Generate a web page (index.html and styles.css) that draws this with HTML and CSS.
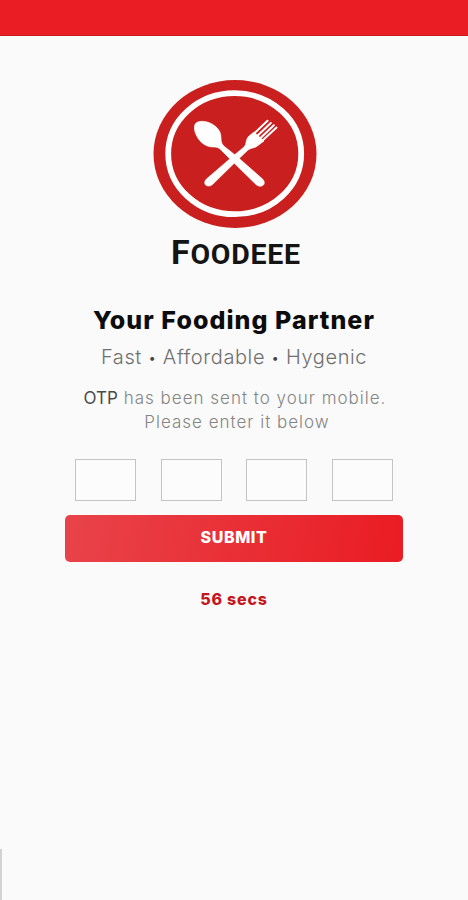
FILE: index.html
```html
<!DOCTYPE html>
<html lang="en">

<head>
    <meta charset="UTF-8">
    <meta name="viewport" content="width=device-width, initial-scale=1">
    <title>Foodeee</title>
    <link rel="stylesheet" href="styles.css">
</head>

<body>
    <div class="screen">
        <header class="status-bar"></header>
        <main class="content">
            <svg class="logo" width="164" height="192" viewBox="153 79 164 192" role="img" aria-label="Foodeee">
                <ellipse cx="235" cy="154" rx="81.5" ry="74" fill="#c9201f" />
                <ellipse cx="234.7" cy="153.7" rx="66.5" ry="60.5" fill="none" stroke="#fff" stroke-width="5.8" />
                <!-- spoon -->
                <path fill="#fff" stroke="#fff" stroke-width=".6" d="M196 123C200 120 209 121 215 126C220 130 221 134 221 138C221 142 222 145 225 147L237 156.500L262 178.500C268 184 261 189 256 184.500L232 161L221 150C219 147.500 216 147 213 147C205 147 198 141 195 132C194 128 194 125 196 123Z" />
                <!-- fork -->
                <path fill="#fff" stroke="#fff" stroke-width=".6" d="M254 132L264 141L258 145.500C255 148.500 251 147.500 248 150L236 161.500L213 184C208 189 201 184 207 178.500L232 157L244 147C247 144 245 140 249 136Z" />
                <path fill="none" stroke="#fff" stroke-width="2" stroke-linecap="round" d="M253.500 134L267.500 120.700M256.500 136.700L270.800 123M259.500 139L273.800 125.300M262 141L276.500 127.600" />
                <text class="logo-name" x="171" y="264" textLength="129" lengthAdjust="spacing"><tspan class="logo-initial">F</tspan>OODEEE</text>
            </svg>
            <h1 class="title">Your Fooding Partner</h1>
            <p class="tagline">Fast <i>•</i> Affordable <i>•</i> Hygenic</p>
            <p class="message"><span class="first"><b>OTP</b> has been sent to your mobile.</span><span class="second">Please enter it below</span></p>
            <form class="otp-form">
                <div class="digits">
                    <input type="text" maxlength="1" aria-label="Digit 1">
                    <input type="text" maxlength="1" aria-label="Digit 2">
                    <input type="text" maxlength="1" aria-label="Digit 3">
                    <input type="text" maxlength="1" aria-label="Digit 4">
                </div>
                <button class="submit" type="button">SUBMIT</button>
            </form>
            <div class="timer">56 secs</div>
        </main>
        <div class="scroll-thumb"></div>
    </div>
</body>

</html>
```
FILE: styles.css
```css
* {
  box-sizing: border-box;
}

body {
  margin: 0;
  background: #fafafa;
  font-family: Inter, "Liberation Sans", sans-serif;
}

.screen {
  position: relative;
  height: 900px;
  overflow: hidden;
}

.status-bar {
  height: 36px;
  background: #ea1d24;
  border-bottom: 1px solid #c9181c;
}

.content {
  display: flex;
  flex-direction: column;
  align-items: center;
  padding-top: 43px;
}

.logo {
  display: block;
  margin-left: 2px;
}
.logo-name {
  font: bold 28.500px Roboto, sans-serif;
  fill: #141414;
}
.logo-initial {
  font-size: 34px;
}

.title,
.tagline,
.message {
  margin: 0;
  white-space: nowrap;
}

.title {
  margin-top: 33px;
  font-size: 25px;
  line-height: 32px;
  font-weight: 800;
  letter-spacing: 1.050px;
  color: #0c0c0c;
}

.tagline {
  height: 28px;
  margin-top: 7px;
  font-size: 20px;
  line-height: 28px;
  font-weight: 300;
  letter-spacing: .6px;
  color: #707070;
}
.tagline i {
  font-size: 14px;
  line-height: 1;
  font-style: normal;
  vertical-align: 1px;
  color: #444;
}

.message {
  margin-top: 16px;
  font-size: 17px;
  line-height: 23.500px;
  font-weight: 300;
  color: #858585;
  text-align: center;
}
.message span {
  display: block;
}
.message b {
  font-weight: 400;
  letter-spacing: 0;
  color: #4a4a4a;
}
.message .first {
  letter-spacing: 1px;
  margin-left: 2px;
}
.message .second {
  letter-spacing: 1px;
  margin-left: 6px;
}

.otp-form {
  width: 338px;
  margin-top: 25px;
}

.digits {
  display: flex;
  justify-content: space-between;
  padding: 0 10px;
}
.digits input {
  width: 61px;
  height: 42px;
  padding: 0;
  border: 1px solid #c4c4c4;
  border-radius: 0;
  background: #fcfcfc;
  text-align: center;
  font-size: 18px;
}

.submit {
  display: block;
  width: 338px;
  height: 47px;
  margin-top: 14px;
  padding: 0 0 3px;
  border: 0;
  border-radius: 5px;
  background: linear-gradient(100deg, #e9434a, #ea1c23);
  color: #fff;
  font: 800 16px Inter, sans-serif;
  letter-spacing: .6px;
}

.timer {
  margin-top: 26px;
  font-size: 16px;
  line-height: 22px;
  font-weight: 800;
  letter-spacing: .8px;
  color: #c4161c;
}

.scroll-thumb {
  position: absolute;
  left: 0;
  bottom: 0;
  width: 2px;
  height: 51px;
  background: #d2d2d2;
}
```
